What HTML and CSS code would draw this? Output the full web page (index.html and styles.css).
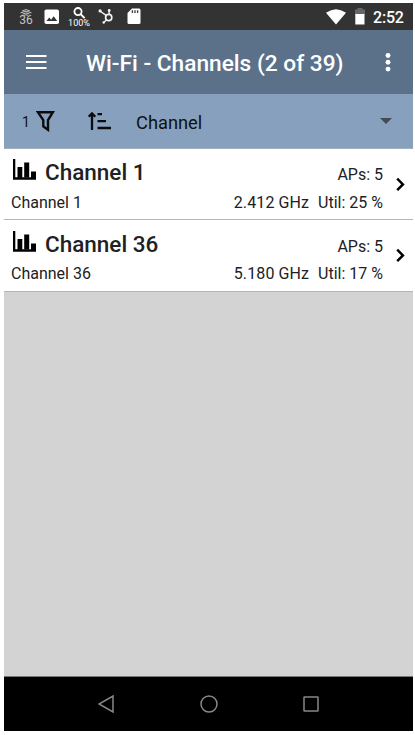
FILE: index.html
```html
<!DOCTYPE html>
<html lang="en">
<head>
<meta charset="utf-8">
<title>Wi-Fi - Channels</title>
<link rel="stylesheet" href="styles.css">
</head>
<body>
<main class="screen">
  <div class="status">
    <div class="signal">
      <svg width="12" height="7" viewBox="0 0 12 7" fill="none" stroke="#c4c4c4" stroke-width="1"><path d="M2 2Q6-.8 10 2M.5 3.8Q6 .8 11.5 3.8M2.5 5Q6 3 9.5 5M4 6.4Q6 5 8 6.4"/></svg>
      <span>36</span>
    </div>
    <svg class="photo" width="16" height="16" viewBox="0 0 16 16"><rect x=".5" y=".5" width="14.5" height="14.5" rx="1.8" fill="#fff"/><path d="M2.5 12 5.2 8.4 7.1 10.7 9.7 7.3 13.2 12Z" fill="#333"/></svg>
    <div class="zoom">
      <svg width="13" height="12" viewBox="0 0 13 12" fill="none" stroke="#fff"><circle cx="5" cy="4.600" r="3.600" stroke-width="1.800"/><path d="m7.600 7.100 4 4" stroke-width="2"/></svg>
      <span>100%</span>
    </div>
    <svg class="hub" width="17" height="17" viewBox="0 0 17 17" fill="none" stroke="#f2f2f2" stroke-width="1.4"><circle cx="10.7" cy="9.5" r="3.1" stroke-width="1.7"/><path d="M2 3 8.4 7.6M11.1 6.5V3M8.5 11.8 5.8 14.4"/><g fill="#f2f2f2" stroke="none"><circle cx="2.1" cy="2.9" r="1.6"/><circle cx="11.2" cy="2.5" r="1.4"/><circle cx="5.7" cy="14.5" r="1.2"/></g></svg>
    <svg class="card" width="14" height="17" viewBox="0 0 14 17"><path d="M5 .5h7q1.5 0 1.5 1.5v12.5q0 1.5-1.5 1.5H2Q.5 16 .5 14.500V5Z" fill="#fff"/><path d="M5.400 2.200v2.700M8 2.200v2.700M10.600 2.200v2.700" stroke="#444" stroke-width="1.400"/></svg>
    <svg class="wifi" width="20" height="16" viewBox="0 0 20 16"><path d="M0 3.800Q10-3.300 20 3.800L10 15.500Z" fill="#fff"/></svg>
    <svg class="battery" width="10" height="17" viewBox="0 0 10 17"><path d="M2.500 0h5v1.500H10V7H0V1.500h2.500Z" fill="#666"/><path d="M.300 6h9.200v10.500H.300Z" fill="#fff"/></svg>
    <span class="clock">2:52</span>
  </div>
  <header class="appbar">
    <svg width="21" height="16" viewBox="0 0 21 16" stroke="#fff" stroke-width="2"><path d="M0 2h20.500M0 8h20.500M0 14h20.500"/></svg>
    <h1>Wi-Fi - Channels (2 of 39)</h1>
    <svg class="more" width="6" height="20" viewBox="0 0 6 20" fill="#fff"><circle cx="3" cy="3.500" r="2.450"/><circle cx="3" cy="10.300" r="2.450"/><circle cx="3" cy="17.100" r="2.450"/></svg>
  </header>
  <div class="toolbar">
    <span class="count">1</span>
    <svg class="funnel" width="19" height="22" viewBox="0 0 19 22" fill="none" stroke="#0b0b0b" stroke-width="2.400"><path d="M1.900 2.200H16.900L12 10V19.800L7.300 16.500V10Z"/></svg>
    <svg class="sort" width="24" height="20" viewBox="0 0 24 20" fill="none" stroke="#0b0b0b" stroke-width="2.300"><path d="M4 19V2.500M.700 5.800 4 2.500 7.300 5.800M9.500 3.200h4.500M9.500 10.200h8.500M9.500 17h13.500"/></svg>
    <span class="field">Channel</span>
    <svg class="drop" width="12" height="6" viewBox="0 0 12 6"><path d="M0 0h12L6 6Z" fill="#454b54"/></svg>
  </div>
  <section class="list">
    <article class="row">
      <div class="info">
        <div class="top"><svg width="24" height="21" viewBox="0 0 24 21"><path d="M0 0h2.300v18.300H23v2.500H0Z"/><path d="M4.500 8h4.800v11H4.500ZM11.200 3.500h5v15h-5ZM18 12.500h5v7h-5Z"/></svg><h2>Channel 1</h2><span>APs: 5</span></div>
        <div class="bottom"><span>Channel 1</span><span class="freq">2.412 GHz</span><span>Util: 25 %</span></div>
      </div>
      <svg class="chevron" width="9" height="15" viewBox="0 0 9 15" fill="none" stroke="#000" stroke-width="2.500"><path d="m1.200 1.700 5.700 5.700-5.700 5.700"/></svg>
    </article>
    <article class="row">
      <div class="info">
        <div class="top"><svg width="24" height="21" viewBox="0 0 24 21"><path d="M0 0h2.300v18.300H23v2.500H0Z"/><path d="M4.500 8h4.800v11H4.500ZM11.200 3.500h5v15h-5ZM18 12.500h5v7h-5Z"/></svg><h2>Channel 36</h2><span>APs: 5</span></div>
        <div class="bottom"><span>Channel 36</span><span class="freq">5.180 GHz</span><span>Util: 17 %</span></div>
      </div>
      <svg class="chevron" width="9" height="15" viewBox="0 0 9 15" fill="none" stroke="#000" stroke-width="2.500"><path d="m1.200 1.700 5.700 5.700-5.700 5.700"/></svg>
    </article>
  </section>
  <nav class="nav">
    <svg width="16" height="18" viewBox="0 0 16 18"><path d="M15 1v16L1 9Z"/></svg>
    <svg width="18" height="18" viewBox="0 0 18 18"><circle cx="9" cy="9" r="8"/></svg>
    <svg width="16" height="16" viewBox="0 0 16 16"><rect x="1" y="1" width="14" height="14" rx=".5"/></svg>
  </nav>
</main>
</body>
</html>
```

FILE: styles.css
```css
* { box-sizing: border-box; }
body { margin: 0; background: #fff; font-family: Roboto, sans-serif; color: #202124; }
svg { display: block; flex: none; }
h1, h2 { margin: 0; font-weight: 500; white-space: nowrap; }
span { white-space: nowrap; }
.screen { width: 409px; height: 728px; margin: 3px 0 0 4px; display: flex; flex-direction: column; background: #d3d3d3; }
.status { height: 27px; background: #333; display: flex; align-items: center; color: #fff; padding: 0 9px 0 14px; }
.signal, .zoom { display: flex; flex-direction: column; align-items: center; }
.signal { width: 16px; color: #c4c4c4; font-size: 12px; line-height: 11px; padding-top: 2px; }
.signal span { margin-top: -1px; }
.photo { margin-left: 10px; }
.zoom { width: 22px; margin-left: 8px; font-size: 9px; line-height: 9px; padding-top: 2px; }
.zoom svg { margin-left: 1px; }
.hub { margin-left: 8px; }
.card { margin-left: 12px; }
.wifi { margin-left: auto; }
.battery { margin-left: 9px; }
.clock { width: 31px; margin-left: 8px; font-size: 16px; font-weight: 500; letter-spacing: -.2px; padding-top: 2px; }
.appbar { height: 64px; background: #5b7189; display: flex; align-items: center; padding: 0 22px; color: #fff; }
.appbar h1 { margin: 3px 0 0 39px; font-size: 22.700px; }
.more { margin-left: auto; }
.toolbar { height: 55px; background: #87a0bd; border-bottom: 1px solid #a4afbe; display: flex; align-items: center; padding: 0 21px 0 18px; color: #111; }
.count { width: 9px; font-size: 14px; margin-top: 2px; }
.funnel { margin-left: 5px; }
.sort { margin-left: 33px; }
.field { margin-left: 24px; font-size: 18.300px; margin-top: 2px; }
.drop { margin-left: auto; }
.list { flex: 1; }
.row { height: 71.5px; background: #fff; border-bottom: 1px solid #b5b5b5; display: flex; align-items: center; padding: 0 8px 0 7px; }
.row:first-child { height: 71px; }
.row:last-child { height: 72px; }
.info { flex: 1; padding-top: 4px; }
.top { height: 32px; display: flex; align-items: center; padding-left: 2px; }
.top svg { margin-top: -5px; }
.top h2 { margin-left: 8px; font-size: 22.500px; }
.top span { margin-left: auto; margin-top: 5px; font-size: 16px; }
.bottom { height: 28px; display: flex; align-items: center; font-size: 16px; }
.freq { margin-left: auto; margin-right: 9px; letter-spacing: .1px; }
.chevron { margin-left: 13px; }
.nav { height: 55px; background: #000; border-top: 1px solid #777; display: flex; align-items: center; justify-content: space-between; padding: 0 94px 0 94px; }
.nav svg { fill: none; stroke: #888; stroke-width: 1.500; }
```
